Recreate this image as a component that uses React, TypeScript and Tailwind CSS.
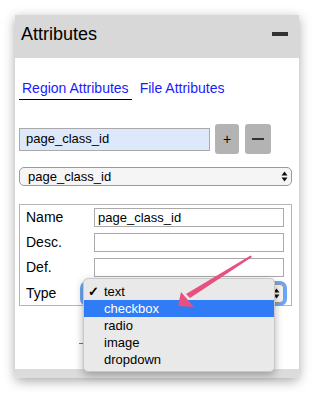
import React from 'react';

const font = { fontFamily: '"Liberation Sans", Arial, sans-serif' };

const Stepper: React.FC = () => (
  <svg width="7" height="11" viewBox="0 0 7 11" className="shrink-0">
    <path d="M3.5 0.5 L6.5 4.5 L0.5 4.5 Z" fill="#111" />
    <path d="M3.5 10.5 L6.5 6.5 L0.5 6.5 Z" fill="#111" />
  </svg>
);

const App: React.FC = () => {
  const rows = [
    { label: 'Name', value: 'page_class_id' },
    { label: 'Desc.', value: '' },
    { label: 'Def.', value: '' },
  ];
  const options = ['text', 'checkbox', 'radio', 'image', 'dropdown'];

  return (
    <div className="w-[314px] h-[394px] bg-white pt-[15px] pl-[15px] relative overflow-hidden" style={font}>
      <div className="w-[284px] h-[363px] flex flex-col rounded-b-[5px] shadow-[0_3px_12px_rgba(0,0,0,0.35)] overflow-hidden">
        {/* Header */}
        <div className="h-[43px] bg-[#d8d8d8] flex items-center justify-between pl-[6px] pr-[11px] pb-[5px] shrink-0">
          <span className="text-[18px] text-black leading-none">Attributes</span>
          <span className="block w-[16px] h-[4px] bg-[#333]" />
        </div>

        {/* Body */}
        <div className="flex-1 bg-white pl-[4px] pr-[7px] flex flex-col">
          {/* Tabs */}
          <div className="flex items-end mt-[19px] h-[23px]">
            <div className="px-[3px] pb-[4px] border-b-[1.5px] border-black text-[14px] text-[#1a1aff] leading-none">Region Attributes</div>
            <div className="pl-[8px] pb-[5px] text-[14px] text-[#1a1aff] leading-none">File Attributes</div>
          </div>

          {/* New attribute */}
          <div className="flex items-center mt-[24px] h-[30px]">
            <div className="w-[191px] h-[23px] bg-[#dde8fb] border border-[#a9a9a9] flex items-center pl-[6px] text-[13px] text-black">page_class_id</div>
            <div className="w-[24px] h-[30px] ml-[5px] rounded-[3px] bg-[#b3b3b3] flex items-center justify-center text-[14px] text-black">+</div>
            <div className="w-[26px] h-[30px] ml-[6px] rounded-[3px] bg-[#b3b3b3] flex items-center justify-center">
              <span className="block w-[12px] h-[2px] bg-[#333]" />
            </div>
          </div>

          {/* Attribute select */}
          <div className="mt-[13px] w-[273px] h-[19px] rounded-[5px] border border-[#9a9a9a] bg-[#f5f5f5] flex items-center justify-between pl-[8px] pr-[3px] text-[13px] text-black">
            <span>page_class_id</span>
            <Stepper />
          </div>

          {/* Attribute table */}
          <div className="mt-[18px] w-[273px] h-[102px] border border-[#b5b5b5] pl-[6px] pr-[7px] pt-[3px] flex flex-col gap-[6px]">
            {rows.map((r) => (
              <div key={r.label} className="flex items-center h-[19px]">
                <span className="w-[68px] text-[14px] text-black">{r.label}</span>
                <div className="w-[190px] h-[19px] border border-[#aaa] flex items-center pl-[3px] text-[13px] text-black">{r.value}</div>
              </div>
            ))}
            <div className="flex items-center h-[19px] mt-[1px]">
              <span className="w-[57px] text-[14px] text-black">Type</span>
              <div className="w-[201px] h-[19px] rounded-[4px] border border-[#9a9a9a] bg-[#f5f5f5] ring-[3px] ring-[#6da6f5] flex items-center justify-end pr-[3px]">
                <Stepper />
              </div>
            </div>
          </div>

          <div className="mt-[37px] ml-[60px] w-[4px] h-[1px] bg-[#7b5fe0]" />
        </div>

        {/* Footer */}
        <div className="h-[9px] bg-[#dcdcdc] shrink-0" />
      </div>

      {/* Dropdown menu */}
      <div className="absolute left-[83px] top-[278px] w-[192px] h-[94px] rounded-[5px] bg-[#e9e9e9] border border-[#c8c8c8] shadow-[0_3px_8px_rgba(0,0,0,0.3)] pt-[4px]">
        {options.map((o, i) => (
          <div
            key={o}
            className={`h-[17px] flex items-center pl-[20px] text-[13px] relative ${i === 1 ? 'bg-[#2f7cf6] text-white' : 'text-black'}`}
          >
            {i === 0 && <span className="absolute left-[4px] text-[13px] font-bold">✓</span>}
            {o}
          </div>
        ))}
      </div>

      {/* Pointer arrow */}
      <svg className="absolute left-0 top-0 pointer-events-none" width="314" height="394" viewBox="0 0 314 394">
        <polygon points="250.5,255.5 252,257 190,298 186,294" fill="#e8507f" />
        <polygon points="178,306 181,292 194,307" fill="#e8507f" />
      </svg>
    </div>
  );
};

export default App;
